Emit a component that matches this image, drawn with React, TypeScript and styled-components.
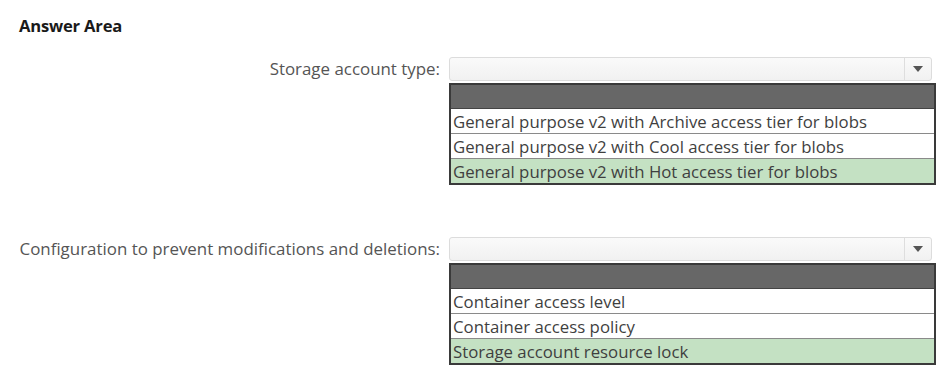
import React from "react";
import styled, { createGlobalStyle } from "styled-components";

const Global = createGlobalStyle`
  html, body { margin: 0; padding: 0; background: #fff; }
  body { font-family: "Open Sans", "Noto Sans", Arial, sans-serif; }
`;

const Page = styled.div`
  width: 951px;
  height: 375px;
  box-sizing: border-box;
  padding: 16px 14px 0 19px;
  background: #fff;
`;

const Title = styled.div`
  font-family: "Open Sans", sans-serif;
  font-weight: 700;
  font-size: 16.6px;
  letter-spacing: -0.2px;
  color: #1a1a1a;
  line-height: 20px;
`;

const Grid = styled.div`
  display: grid;
  grid-template-columns: 422px 487px;
  column-gap: 9px;
  row-gap: 52px;
  margin-top: 21px;
  margin-left: -1px;
`;

const Label = styled.div`
  text-align: right;
  font-size: 16.9px;
  color: #555;
  line-height: 24px;
  white-space: nowrap;
`;

const Control = styled.div`
  display: flex;
  flex-direction: column;
  gap: 2px;
`;

const Select = styled.div`
  height: 24px;
  width: 483px;
  box-sizing: border-box;
  border: 1px solid #dcdcdc;
  border-radius: 3px;
  background: linear-gradient(#fafafa, #f1f1f1);
  display: flex;
  justify-content: flex-end;
`;

const ArrowBox = styled.div`
  width: 26px;
  border-left: 1px solid #dedede;
  display: flex;
  align-items: center;
  justify-content: center;
`;

const List = styled.div`
  width: 487px;
  box-sizing: border-box;
  border: 2px solid #3a3a3a;
  display: flex;
  flex-direction: column;
  background: #fff;
`;

const Header = styled.div`
  height: 23px;
  background: #676767;
  border-bottom: 1px solid #444;
`;

const Option = styled.div<{ $selected?: boolean; $last?: boolean }>`
  height: 24px;
  line-height: 25px;
  padding-left: 2px;
  font-size: 16.8px;
  color: #3f3f3f;
  background: ${(p) => (p.$selected ? "#c4e1c3" : "#fff")};
  border-bottom: ${(p) => (p.$last ? "none" : "1px solid #8a8a8a")};
  white-space: nowrap;
  overflow: hidden;
`;

const Arrow = () => (
  <svg width="10" height="6" viewBox="0 0 10 6">
    <path d="M0 0 L10 0 L5 6 Z" fill="#555" />
  </svg>
);

type Item = { label: string; options: string[]; selected: number };

const items: Item[] = [
  {
    label: "Storage account type:",
    options: [
      "General purpose v2 with Archive access tier for blobs",
      "General purpose v2 with Cool access tier for blobs",
      "General purpose v2 with Hot access tier for blobs",
    ],
    selected: 2,
  },
  {
    label: "Configuration to prevent modifications and deletions:",
    options: [
      "Container access level",
      "Container access policy",
      "Storage account resource lock",
    ],
    selected: 2,
  },
];

export default function App() {
  return (
    <Page>
      <Global />
      <Title>Answer Area</Title>
      <Grid>
        {items.map((it) => (
          <React.Fragment key={it.label}>
            <Label>{it.label}</Label>
            <Control>
              <Select>
                <ArrowBox>
                  <Arrow />
                </ArrowBox>
              </Select>
              <List>
                <Header />
                {it.options.map((o, i) => (
                  <Option
                    key={o}
                    $selected={i === it.selected}
                    $last={i === it.options.length - 1}
                  >
                    {o}
                  </Option>
                ))}
              </List>
            </Control>
          </React.Fragment>
        ))}
      </Grid>
    </Page>
  );
}
